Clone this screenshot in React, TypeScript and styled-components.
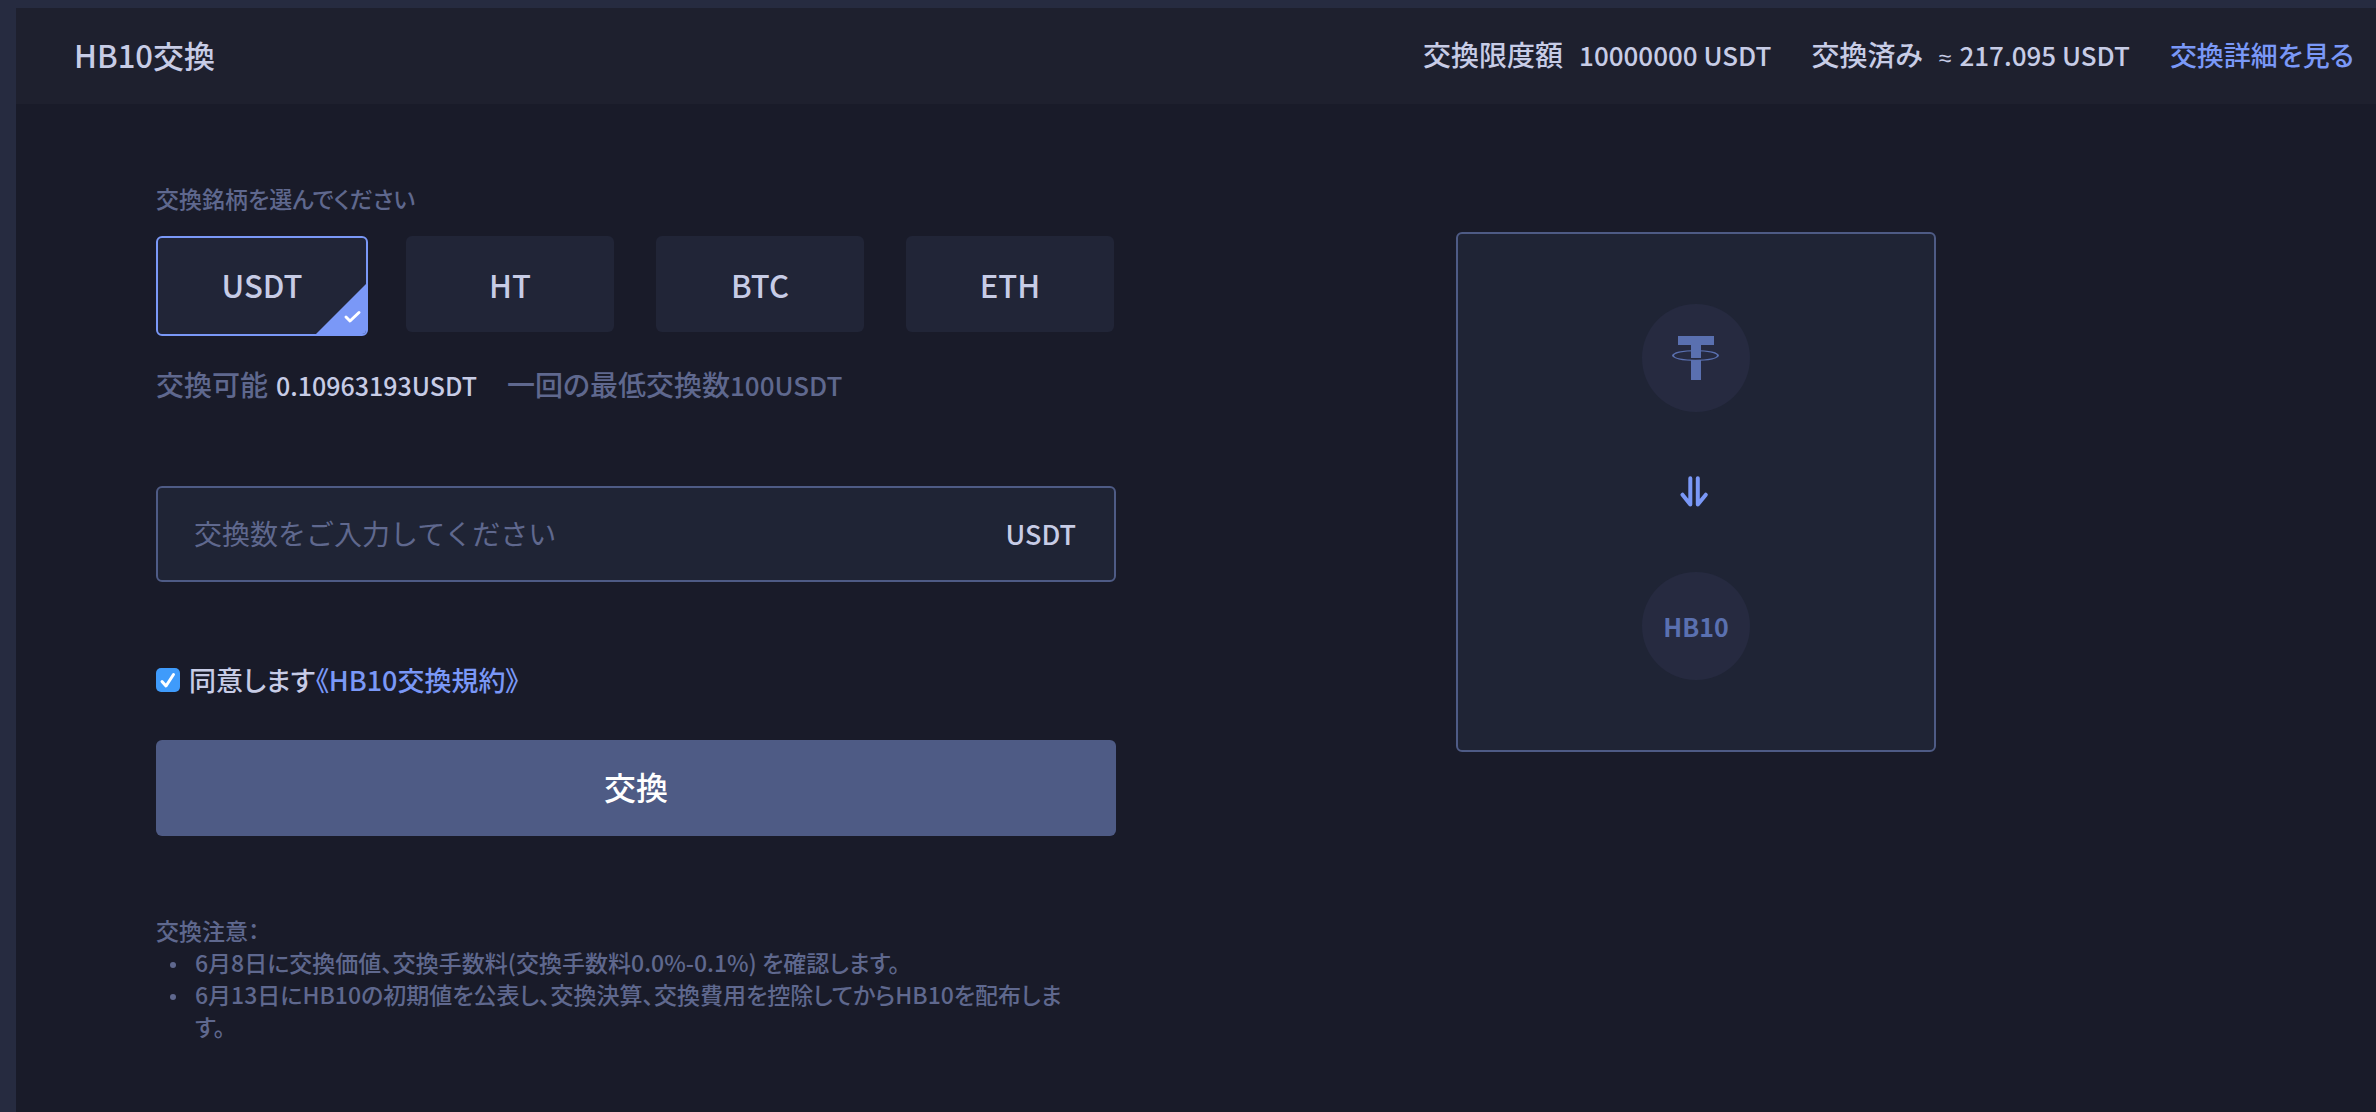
import React, { useState } from "react";
import styled, { createGlobalStyle, css } from "styled-components";

const color = {
  frame: "#262b40",
  header: "#1e202e",
  body: "#191b29",
  tile: "#212537",
  field: "#1f2435",
  line: "#4e5b85",
  text: "#c7cce6",
  muted: "#5f688e",
  link: "#7a98f7",
  badge: "#262a40",
  badgeInk: "#5a70b0",
};

const GlobalStyle = createGlobalStyle`
  *, *::before, *::after { box-sizing: border-box; }
  body {
    margin: 0;
    background: ${color.frame};
    color: ${color.text};
    font-family: "Noto Sans CJK JP", "Noto Sans", sans-serif;
    font-weight: 500;
    font-feature-settings: "palt";
  }
  button, input { font: inherit; color: inherit; }
`;

const Page = styled.div`
  min-height: 100vh;
  padding: 8px 0 0 16px;
  display: flex;
`;

const Panel = styled.main`
  flex: 1;
  background: ${color.body};
`;

const Header = styled.header`
  display: flex;
  align-items: center;
  justify-content: space-between;
  height: 96px;
  padding: 0 22px 4px 58px;
  background: ${color.header};
`;

const Title = styled.h1`
  margin: 0;
  font-size: 31px;
  font-weight: 500;
`;

const Latin = styled.span`
  font-size: 26px;
`;

const Approx = styled.span`
  margin-right: 8px;
  font-family: "Liberation Sans", sans-serif;
  font-size: 23px;
  line-height: 1;
`;

const Stats = styled.div`
  display: flex;
  align-items: baseline;
  gap: 40px;
  font-size: 28px;
  line-height: 40px;
`;

const Stat = styled.div`
  display: flex;
  align-items: baseline;
  gap: 16px;
`;

const Link = styled.a`
  color: ${color.link};
  font-size: 27px;
  text-decoration: none;
`;

const Content = styled.div`
  display: flex;
  align-items: flex-start;
  padding: 78px 100px 64px 140px;
`;

const Form = styled.form`
  flex: 0 1 960px;
  display: flex;
  flex-direction: column;
`;

const FieldLabel = styled.div`
  margin-bottom: 22px;
  color: ${color.muted};
  font-size: 23px;
  line-height: 32px;
`;

const CoinRow = styled.div`
  display: grid;
  grid-template-columns: repeat(4, 1fr);
  gap: 42px;
  height: 100px;
  padding-right: 2px;
  align-items: start;
`;

const CoinButton = styled.button<{ $selected: boolean }>`
  position: relative;
  width: 100%;
  height: 96px;
  padding: 0;
  border: 0;
  border-radius: 6px;
  overflow: hidden;
  background: ${color.tile};
  font-size: 31px;
  cursor: pointer;
  ${(p) =>
    p.$selected &&
    css`
      width: calc(100% + 4px);
      height: 100px;
      padding-bottom: 4px;
      border: 2px solid ${color.link};
    `}
`;

const Corner = styled.svg`
  position: absolute;
  right: 0;
  bottom: 0;
`;

const Balance = styled.div`
  display: flex;
  align-items: baseline;
  height: 40px;
  margin-top: 28px;
  color: ${color.muted};
  font-size: 28px;
  line-height: 40px;
`;

const Amount = styled.span`
  margin: 0 30px 0 8px;
  color: ${color.text};
  font-size: 25px;
`;

const AmountField = styled.label`
  display: flex;
  align-items: center;
  height: 96px;
  margin-top: 82px;
  padding: 0 38px 2px 36px;
  border: 2px solid ${color.line};
  border-radius: 6px;
  background: ${color.field};
  font-size: 27px;
`;

const AmountInput = styled.input`
  flex: 1;
  min-width: 0;
  padding: 0;
  border: 0;
  outline: 0;
  background: transparent;
  font-size: 28px;
  font-weight: 400;
  font-feature-settings: normal;
  &::placeholder {
    color: ${color.muted};
    opacity: 1;
  }
`;

const Agreement = styled.div`
  display: flex;
  align-items: center;
  margin-top: 78px;
  font-size: 27px;
  line-height: 40px;
`;

const AgreeLabel = styled.label`
  display: flex;
  align-items: center;
  gap: 9px;
`;

const CheckFrame = styled.span`
  display: grid;
  width: 24px;
  height: 24px;
  & > * {
    grid-area: 1 / 1;
  }
`;

const Checkbox = styled.input`
  appearance: none;
  width: 24px;
  height: 24px;
  margin: 0;
  border-radius: 5px;
  background: ${color.field};
  &:checked {
    background: #3f9bfb;
  }
  &:not(:checked) + svg {
    visibility: hidden;
  }
`;

const CheckMark = styled.svg`
  pointer-events: none;
`;

const Submit = styled.button`
  height: 96px;
  margin-top: 40px;
  padding: 0 0 4px;
  border: 0;
  border-radius: 6px;
  background: ${color.line};
  color: #ffffff;
  font-size: 32px;
  cursor: pointer;
`;

const Notes = styled.section`
  margin-top: 78px;
  color: ${color.muted};
  font-size: 23px;
  line-height: 32px;
`;

const NotesTitle = styled.h2`
  margin: 0;
  font-size: 23px;
  font-weight: 500;
`;

const NoteList = styled.ul`
  margin: 0;
  padding: 0;
  list-style: none;
`;

const Note = styled.li`
  display: grid;
  grid-template-columns: 6px 1fr;
  column-gap: 19px;
  padding: 0 44px 0 14px;
  &::before {
    content: "";
    width: 6px;
    height: 6px;
    margin-top: 16px;
    border-radius: 50%;
    background: ${color.muted};
  }
`;

const Preview = styled.aside`
  flex: 1;
  display: flex;
  justify-content: center;
  padding-top: 50px;
`;

const PreviewCard = styled.div`
  display: flex;
  flex-direction: column;
  align-items: center;
  gap: 64px;
  width: 480px;
  padding: 70px 0;
  border: 2px solid ${color.line};
  border-radius: 6px;
  background: ${color.field};
`;

const CoinBadge = styled.div`
  display: grid;
  place-items: center;
  width: 108px;
  height: 108px;
  border-radius: 50%;
  background: ${color.badge};
  color: ${color.badgeInk};
  font-size: 25px;
  font-weight: 700;
`;

const coins = ["USDT", "HT", "BTC", "ETH"];

const notes = [
  "6月8日に交換価値、交換手数料(交換手数料0.0%-0.1%) を確認します。",
  "6月13日にHB10の初期値を公表し、交換決算、交換費用を控除してからHB10を配布します。",
];

function SelectedCorner() {
  return (
    <Corner width="50" height="50" viewBox="0 0 50 50" aria-hidden="true">
      <path d="M0 50 L50 0 V50 Z" fill={color.link} />
      <path
        d="M30 33 L34 37 L43 28.5"
        fill="none"
        stroke="#fff"
        strokeWidth="3"
        strokeLinecap="round"
        strokeLinejoin="round"
      />
    </Corner>
  );
}

function TetherIcon() {
  return (
    <svg width="48" height="44" viewBox="0 0 48 44" fill="currentColor" aria-hidden="true">
      <path d="M6 0 H42 V9 H29 V22 H19 V9 H6 Z" />
      <path d="M19 24 H29 V44 H19 Z" />
      <path
        fillRule="evenodd"
        d="M0 19.5 A23.5 5.5 0 0 1 47 19.5 A23.5 5.5 0 0 1 0 19.5 Z M2 19.5 A21.5 4.3 0 0 0 45 19.5 A21.5 4.3 0 0 0 2 19.5 Z"
      />
    </svg>
  );
}

function DownArrows() {
  return (
    <svg
      width="32"
      height="32"
      viewBox="0 0 32 32"
      fill="none"
      stroke={color.link}
      strokeWidth="4"
      strokeLinecap="round"
      strokeLinejoin="round"
      aria-hidden="true"
    >
      <path d="M10.3 2.2 V28.5 L2.5 18.7" />
      <path d="M17.8 2.2 V28.5 L25.8 18.7" />
    </svg>
  );
}

export default function App() {
  const [coin, setCoin] = useState("USDT");
  const [agreed, setAgreed] = useState(true);

  return (
    <>
      <GlobalStyle />
      <Page>
        <Panel lang="ja">
          <Header>
            <Title>HB10交換</Title>
            <Stats>
              <Stat>
                <span>交換限度額</span>
                <Latin>10000000 USDT</Latin>
              </Stat>
              <Stat>
                <span>交換済み</span>
                <Latin>
                  <Approx>≈</Approx>217.095 USDT
                </Latin>
              </Stat>
              <Link href="#details">交換詳細を見る</Link>
            </Stats>
          </Header>
          <Content>
            <Form onSubmit={(e) => e.preventDefault()}>
              <FieldLabel id="coin-label">交換銘柄を選んでください</FieldLabel>
              <CoinRow role="group" aria-labelledby="coin-label">
                {coins.map((name) => (
                  <CoinButton
                    key={name}
                    type="button"
                    $selected={name === coin}
                    aria-pressed={name === coin}
                    onClick={() => setCoin(name)}
                  >
                    {name}
                    {name === coin && <SelectedCorner />}
                  </CoinButton>
                ))}
              </CoinRow>
              <Balance>
                <span>交換可能</span>
                <Amount>0.10963193USDT</Amount>
                <span>
                  一回の最低交換数<Latin>100USDT</Latin>
                </span>
              </Balance>
              <AmountField>
                <AmountInput type="text" inputMode="decimal" placeholder="交換数をご入力してください" />
                <span>{coin}</span>
              </AmountField>
              <Agreement>
                <AgreeLabel>
                  <CheckFrame>
                    <Checkbox
                      type="checkbox"
                      checked={agreed}
                      onChange={(e) => setAgreed(e.target.checked)}
                    />
                    <CheckMark width="24" height="24" viewBox="0 0 24 24" aria-hidden="true">
                      <path
                        d="M6 13.5 L10 18 L17.5 6.5"
                        fill="none"
                        stroke="#fff"
                        strokeWidth="3"
                        strokeLinecap="round"
                        strokeLinejoin="round"
                      />
                    </CheckMark>
                  </CheckFrame>
                  同意します
                </AgreeLabel>
                <Link href="#terms">《HB10交換規約》</Link>
              </Agreement>
              <Submit type="submit">交換</Submit>
              <Notes>
                <NotesTitle>交換注意：</NotesTitle>
                <NoteList>
                  {notes.map((note) => (
                    <Note key={note}>{note}</Note>
                  ))}
                </NoteList>
              </Notes>
            </Form>
            <Preview>
              <PreviewCard>
                <CoinBadge>
                  <TetherIcon />
                </CoinBadge>
                <DownArrows />
                <CoinBadge>HB10</CoinBadge>
              </PreviewCard>
            </Preview>
          </Content>
        </Panel>
      </Page>
    </>
  );
}
